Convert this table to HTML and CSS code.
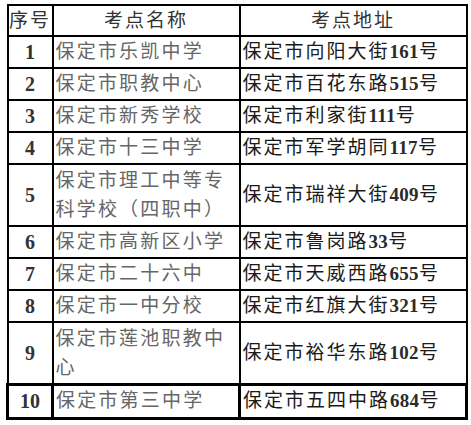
FILE: index.html
```html
<!DOCTYPE html>
<html lang="zh-CN">
<head>
<meta charset="utf-8">
<link rel="stylesheet" href="styles.css">
</head>
<body>
<table class="sites">
  <colgroup>
    <col class="c-no">
    <col class="c-name">
    <col class="c-addr">
  </colgroup>
  <thead>
    <tr class="head">
      <th class="h-no">序号</th>
      <th class="h-name">考点名称</th>
      <th class="h-addr">考点地址</th>
    </tr>
  </thead>
  <tbody>
    <tr><td class="no">1</td><td class="name">保定市乐凯中学</td><td class="addr">保定市向阳大街<span class="num">161</span>号</td></tr>
    <tr><td class="no">2</td><td class="name">保定市职教中心</td><td class="addr">保定市百花东路<span class="num">515</span>号</td></tr>
    <tr><td class="no">3</td><td class="name">保定市新秀学校</td><td class="addr">保定市利家街<span class="num">111</span>号</td></tr>
    <tr><td class="no">4</td><td class="name">保定市十三中学</td><td class="addr">保定市军学胡同<span class="num">117</span>号</td></tr>
    <tr class="tall"><td class="no">5</td><td class="name">保定市理工中等专<br>科学校（四职中）</td><td class="addr">保定市瑞祥大街<span class="num">409</span>号</td></tr>
    <tr><td class="no">6</td><td class="name">保定市高新区小学</td><td class="addr">保定市鲁岗路<span class="num">33</span>号</td></tr>
    <tr><td class="no">7</td><td class="name">保定市二十六中</td><td class="addr">保定市天威西路<span class="num">655</span>号</td></tr>
    <tr><td class="no">8</td><td class="name">保定市一中分校</td><td class="addr">保定市红旗大街<span class="num">321</span>号</td></tr>
    <tr class="tall"><td class="no">9</td><td class="name">保定市莲池职教中<br>心</td><td class="addr">保定市裕华东路<span class="num">102</span>号</td></tr>
    <tr class="last"><td class="no">10</td><td class="name">保定市第三中学</td><td class="addr">保定市五四中路<span class="num">684</span>号</td></tr>
  </tbody>
</table>
</body>
</html>
```

FILE: styles.css
```css
html, body {
  margin: 0;
  padding: 0;
  background: #ffffff;
}

body {
  padding: 4px 0 0 6px;
  font-family: "Liberation Serif", "Noto Sans CJK SC", serif;
}

.sites {
  border-collapse: collapse;
  table-layout: fixed;
  width: 459px;
}

.c-no { width: 45px; }
.c-name { width: 187px; }
.c-addr { width: 227px; }

.sites th,
.sites td {
  border: 2px solid #000;
  padding: 0;
  vertical-align: middle;
  line-height: 24px;
  font-size: 19px;
  white-space: nowrap;
}

.head { height: 31px; }
.sites tbody tr { height: 32px; }
.sites tbody tr.tall { height: 62px; }
.sites tbody tr.last { height: 34px; }

.sites th {
  font-weight: 400;
  color: #333;
  text-align: center;
  letter-spacing: 2px;
}

.h-no { letter-spacing: 1px; text-align: left; padding-left: 1px; }

.no {
  text-align: center;
  font-weight: 700;
  color: #333;
  font-size: 20px !important;
}

.name {
  color: #666;
  padding-left: 2px !important;
  letter-spacing: 2.2px;
}

.tall .name {
  line-height: 29px;
}

.addr {
  color: #1a1a1a;
  padding-left: 2px !important;
  letter-spacing: 2px;
}

.num {
  font-weight: 700;
  color: #2a2a2a;
  letter-spacing: 0.3px;
}

.last td {
  border-width: 3px;
}
```
